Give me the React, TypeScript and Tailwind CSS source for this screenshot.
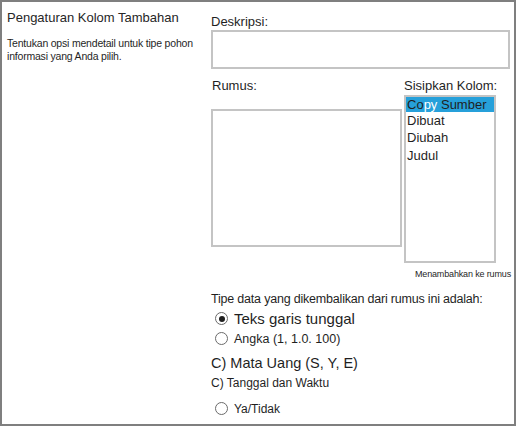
import React from "react";

const font = { fontFamily: '"Liberation Sans", Arial, sans-serif' };

const Radio = ({ checked }: { checked?: boolean }) => (
  <span className="flex h-[13px] w-[13px] shrink-0 items-center justify-center rounded-full border border-[#6b6b6b] bg-white">
    {checked && <span className="h-[6px] w-[6px] rounded-full bg-[#1f1f1f]" />}
  </span>
);

const App = () => {
  const items = ["Dibuat", "Diubah", "Judul"];

  return (
    <div
      className="flex h-[426px] w-[516px] border-2 border-[#7f7f7f] bg-white text-[#1f1f1f]"
      style={font}
    >
      {/* left column */}
      <div className="w-[209px] shrink-0 pl-[5px] pt-[7.5px]">
        <div className="text-[13px] leading-[16px] text-[#262626]">Pengaturan Kolom Tambahan</div>
        <p className="mt-[11.6px] text-[10.5px] leading-[12.5px] tracking-[-0.2px]">
          Tentukan opsi mendetail untuk tipe pohon
          <br />
          informasi yang Anda pilih.
        </p>
      </div>

      {/* right column */}
      <div className="w-[300px] shrink-0 pt-[11.5px]">
        <div className="text-[13px] leading-[16px]">Deskripsi:</div>
        <div className="mt-[0.5px] h-[39px] w-[299px] border-2 border-[#c4c4c4]" />

        <div className="mt-[8.5px] flex">
          <div className="w-[193px] shrink-0">
            <div className="pl-[1px] text-[13px] leading-[16px]">Rumus:</div>
            <div className="mt-[15.5px] h-[138px] w-[191px] border-2 border-[#c4c4c4]" />
          </div>
          <div className="flex flex-col">
            <div className="text-[13px] leading-[16px]">Sisipkan Kolom:</div>
            <div className="mt-[1.5px] h-[168px] w-[92px] border-2 border-[#c4c4c4] text-[13px]">
              <div className="h-[15px] bg-[#26a0da] pl-[1px] leading-[15px]">
                Co<span className="text-white">py</span> Sumber
              </div>
              {items.map((it) => (
                <div key={it} className="pl-[1px] leading-[17.3px] first:mt-[1.5px]">
                  {it}
                </div>
              ))}
            </div>
          </div>
        </div>

        <div className="mt-[5px] text-right text-[9px] leading-[12px] tracking-[-0.15px]">
          Menambahkan ke rumus
        </div>

        <div className="mt-[12px] text-[12.5px] leading-[15px] tracking-[-0.2px]">
          Tipe data yang dikembalikan dari rumus ini adalah:
        </div>

        <div className="mt-[1.6px] flex h-[20px] items-center gap-[6px] pl-[4px]">
          <Radio checked />
          <span className="text-[15px] leading-[20px]">Teks garis tunggal</span>
        </div>
        <div className="mt-[2px] flex h-[16px] items-center gap-[6px] pl-[4px]">
          <Radio />
          <span className="text-[12.5px] leading-[16px]">Angka (1, 1.0. 100)</span>
        </div>
        <div className="mt-[7px] text-[14.5px] leading-[18px]">C) Mata Uang (S, Y, E)</div>
        <div className="mt-[3.5px] text-[12px] leading-[16px]">C) Tanggal dan Waktu</div>
        <div className="mt-[9.5px] flex h-[16px] items-center gap-[6px] pl-[4px]">
          <Radio />
          <span className="text-[12px] leading-[16px]">Ya/Tidak</span>
        </div>
      </div>
    </div>
  );
};

export default App;
